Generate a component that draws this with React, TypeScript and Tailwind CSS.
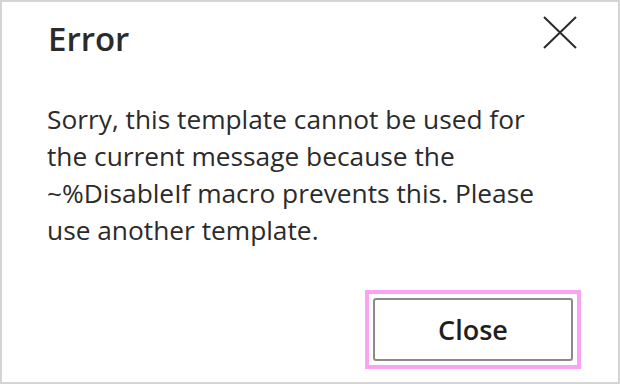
const font = { fontFamily: '"Open Sans", "Noto Sans", sans-serif' };

export default function App() {
  return (
    <div
      className="w-[620px] h-[384px] bg-white border-2 border-[#d4d4d4] flex flex-col text-[#262626]"
      style={font}
    >
      {/* Header */}
      <div className="flex items-start justify-between pl-[46px] pr-[41px] pt-[14px]">
        <h1 className="text-[33px] font-semibold leading-[46px] text-[#2b2b2b]">Error</h1>
        <button type="button" aria-label="Close" className="w-[34px] h-[34px] flex items-center justify-center text-[#2b2b2b]">
          <svg width="34" height="34" viewBox="0 0 34 34" fill="none" stroke="currentColor" strokeWidth="2">
            <path d="M1 1 L33 32 M33 1 L1 32" />
          </svg>
        </button>
      </div>

      {/* Message */}
      <p className="pl-[45px] mt-[39px] text-[26.3px] leading-[37px] text-[#2b2b2b]">
        Sorry, this template cannot be used for
        <br />
        the current message because the
        <br />
        ~%DisableIf macro prevents this. Please
        <br />
        use another template.
      </p>

      {/* Footer */}
      <div className="mt-auto flex justify-end pr-[37px] pb-[13px]">
        <div className="border-4 border-[#f9a3f3] p-1">
          <button
            type="button"
            className="w-[200px] h-[63px] border-2 border-[#8a8a8a] rounded-[3px] bg-white text-[27px] font-semibold text-[#1f1f1f] pt-[2px]"
          >
            Close
          </button>
        </div>
      </div>
    </div>
  );
}
